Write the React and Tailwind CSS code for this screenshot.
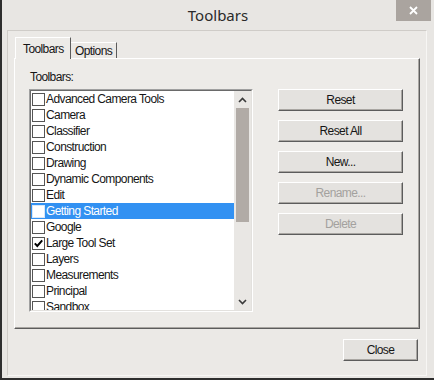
import React from 'react';

const items = [
  { label: 'Advanced Camera Tools' },
  { label: 'Camera' },
  { label: 'Classifier' },
  { label: 'Construction' },
  { label: 'Drawing' },
  { label: 'Dynamic Components' },
  { label: 'Edit' },
  { label: 'Getting Started', selected: true },
  { label: 'Google' },
  { label: 'Large Tool Set', checked: true },
  { label: 'Layers' },
  { label: 'Measurements' },
  { label: 'Principal' },
  { label: 'Sandbox' },
];

const Chevron = ({ down }) => (
  <svg width="9" height="6" viewBox="0 0 9 6">
    <polyline
      points={down ? '1,1 4.5,4.5 8,1' : '1,5 4.5,1.5 8,5'}
      fill="none"
      stroke="#3a3a3a"
      strokeWidth="1.6"
    />
  </svg>
);

const Button = ({ children, disabled }) => (
  <div
    className={`w-[125px] h-[22px] flex items-center justify-center bg-[#e4e2df] border border-t-white border-l-white border-r-[#5c5c5c] border-b-[#5c5c5c] shadow-[inset_-1px_-1px_0_#a9a6a2] ${
      disabled ? 'text-[#a3a19e]' : 'text-[#161616]'
    }`}
  >
    {children}
  </div>
);

const Row = ({ label, checked, selected }) => (
  <div className={`h-[16px] shrink-0 flex items-center ${selected ? 'bg-[#3291f2] text-white' : 'text-[#161616]'}`}>
    <div
      className={`ml-[1px] w-[13px] h-[13px] bg-white border flex items-center justify-center ${
        selected ? 'border-[#d8e8f8]' : 'border-[#555555]'
      }`}
    >
      {checked && (
        <svg width="11" height="11" viewBox="0 0 11 11">
          <path d="M1.8 5.4 L4.3 8 L9.2 2.4" fill="none" stroke="#000" strokeWidth="2" />
        </svg>
      )}
    </div>
    <span className="ml-[1px] whitespace-nowrap">{label}</span>
  </div>
);

export default function App() {
  return (
    <div className="w-[434px] h-[380px] flex flex-col bg-[#e8e6e3] border-l-2 border-b-2 border-[#2e2e2e] font-['Liberation_Sans',Arial,sans-serif] text-[12px] tracking-[-0.6px] leading-none">
      {/* Title bar */}
      <div className="relative h-[30px] shrink-0 flex items-center justify-center">
        <span className="font-['Noto_Sans',sans-serif] text-[15px] tracking-normal text-[#2a2a2a]">Toolbars</span>
        <div className="absolute top-0 right-[3px] w-[35px] h-[21px] bg-[#aaa49f] flex items-center justify-center">
          <svg width="9" height="9" viewBox="0 0 9 9">
            <path d="M1 1 L8 8 M8 1 L1 8" stroke="#fff" strokeWidth="1.8" />
          </svg>
        </div>
      </div>

      {/* Client area */}
      <div className="flex-1 ml-[5px] mr-[7px] mb-[2px] flex flex-col bg-[#ebe9e6] border border-t-[#cfccc8] border-l-[#cfccc8] border-r-[#f7f6f4] border-b-[#f7f6f4]">
        {/* Tabs */}
        <div className="h-[27px] shrink-0 pt-[6px] pl-[7px] flex items-start">
          <div className="relative z-10 w-[56px] h-[22px] bg-[#edebe8] border-t border-l border-r border-t-white border-l-white border-r-[#5c5c5c] flex items-start pl-[7px] pt-[5px] text-[#161616]">
            Toolbars
          </div>
          <div className="mt-[5px] w-[46px] h-[16px] border-t border-r border-t-white border-r-[#5c5c5c] flex items-start pl-[4px] pt-[2px] text-[#161616]">
            Options
          </div>
        </div>

        {/* Tab panel */}
        <div className="mx-[6px] h-[271px] shrink-0 bg-[#edebe8] border border-t-white border-l-white border-r-[#5c5c5c] border-b-[#5c5c5c] shadow-[inset_-1px_-1px_0_#a9a6a2] flex items-start">
          <div className="ml-[14px] pt-[11px] flex flex-col">
            <div className="pl-[1px] h-[14px] flex items-center text-[#161616]">Toolbars:</div>
            <div className="mt-[5px] w-[224px] h-[223px] border border-t-[#a0a0a0] border-l-[#a0a0a0] border-r-white border-b-white">
              <div className="w-full h-full flex border border-t-[#6a6a6a] border-l-[#6a6a6a] border-r-[#e3e1de] border-b-[#e3e1de]">
                <div className="flex-1 bg-white overflow-hidden flex flex-col">
                  {items.map((it) => (
                    <Row key={it.label} {...it} />
                  ))}
                </div>
                <div className="w-[17px] bg-[#e9e7e4] flex flex-col">
                  <div className="h-[17px] flex items-center justify-center">
                    <Chevron />
                  </div>
                  <div className="mx-[2px] h-[114px] bg-[#b1aba6]" />
                  <div className="flex-1" />
                  <div className="h-[17px] flex items-center justify-center">
                    <Chevron down />
                  </div>
                </div>
              </div>
            </div>
          </div>
          <div className="ml-[25px] pt-[30px] flex flex-col gap-[9px]">
            <Button>Reset</Button>
            <Button>Reset All</Button>
            <Button>New...</Button>
            <Button disabled>Rename...</Button>
            <Button disabled>Delete</Button>
          </div>
        </div>

        {/* Footer */}
        <div className="mt-[10px] mr-[8px] flex justify-end">
          <div className="w-[75px] h-[22px] flex items-center justify-center bg-[#e4e2df] border border-t-white border-l-white border-r-[#5c5c5c] border-b-[#5c5c5c] shadow-[inset_-1px_-1px_0_#a9a6a2] text-[#161616]">
            Close
          </div>
        </div>
      </div>
    </div>
  );
}
